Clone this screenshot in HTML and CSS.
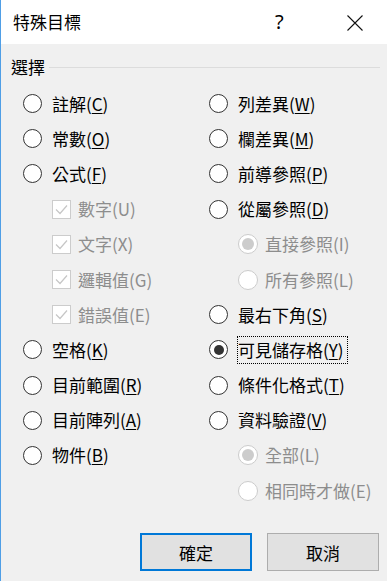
FILE: index.html
```html
<!DOCTYPE html>
<html lang="zh-Hant">
<head>
<meta charset="utf-8">
<title>特殊目標</title>
<link rel="stylesheet" href="styles.css">
</head>
<body>
<div class="window">
  <div class="titlebar">
    <span class="title">特殊目標</span>
    <span class="help">?</span>
    <span class="close">
      <svg width="16" height="16" viewBox="0 0 16 16"><path d="M0.5 0.5 L15.5 15.5 M15.5 0.5 L0.5 15.5" stroke="#111" stroke-width="1.1" fill="none"/></svg>
    </span>
  </div>
  <div class="content">
    <div class="group-head"><span class="group-label">選擇</span><span class="group-line"></span></div>
    <div class="cols">
      <div class="col col-left">
        <div class="row"><span class="radio"></span><span class="label">註解(<u>C</u>)</span></div>
        <div class="row"><span class="radio"></span><span class="label">常數(<u>O</u>)</span></div>
        <div class="row"><span class="radio"></span><span class="label">公式(<u>F</u>)</span></div>
        <div class="row sub disabled"><span class="check"><svg width="17" height="17" viewBox="0 0 17 17"><path d="M3 8.5 L7 12.5 L14 4.5" stroke="#c6c6c6" stroke-width="1.2" fill="none"/></svg></span><span class="label">數字(U)</span></div>
        <div class="row sub disabled"><span class="check"><svg width="17" height="17" viewBox="0 0 17 17"><path d="M3 8.5 L7 12.5 L14 4.5" stroke="#c6c6c6" stroke-width="1.2" fill="none"/></svg></span><span class="label">文字(X)</span></div>
        <div class="row sub disabled"><span class="check"><svg width="17" height="17" viewBox="0 0 17 17"><path d="M3 8.5 L7 12.5 L14 4.5" stroke="#c6c6c6" stroke-width="1.2" fill="none"/></svg></span><span class="label">邏輯值(G)</span></div>
        <div class="row sub disabled"><span class="check"><svg width="17" height="17" viewBox="0 0 17 17"><path d="M3 8.5 L7 12.5 L14 4.5" stroke="#c6c6c6" stroke-width="1.2" fill="none"/></svg></span><span class="label">錯誤值(E)</span></div>
        <div class="row"><span class="radio"></span><span class="label">空格(<u>K</u>)</span></div>
        <div class="row"><span class="radio"></span><span class="label">目前範圍(<u>R</u>)</span></div>
        <div class="row"><span class="radio"></span><span class="label">目前陣列(<u>A</u>)</span></div>
        <div class="row"><span class="radio"></span><span class="label">物件(<u>B</u>)</span></div>
      </div>
      <div class="col col-right">
        <div class="row"><span class="radio"></span><span class="label">列差異(<u>W</u>)</span></div>
        <div class="row"><span class="radio"></span><span class="label">欄差異(<u>M</u>)</span></div>
        <div class="row"><span class="radio"></span><span class="label">前導參照(<u>P</u>)</span></div>
        <div class="row"><span class="radio"></span><span class="label">從屬參照(<u>D</u>)</span></div>
        <div class="row sub disabled"><span class="radio checked"></span><span class="label">直接參照(I)</span></div>
        <div class="row sub disabled"><span class="radio"></span><span class="label">所有參照(L)</span></div>
        <div class="row"><span class="radio"></span><span class="label">最右下角(<u>S</u>)</span></div>
        <div class="row"><span class="radio checked"></span><span class="label focus">可見儲存格(<u>Y</u>)</span></div>
        <div class="row"><span class="radio"></span><span class="label">條件化格式(<u>T</u>)</span></div>
        <div class="row"><span class="radio"></span><span class="label">資料驗證(<u>V</u>)</span></div>
        <div class="row sub disabled"><span class="radio checked"></span><span class="label">全部(L)</span></div>
        <div class="row sub disabled"><span class="radio"></span><span class="label">相同時才做(E)</span></div>
      </div>
    </div>
    <div class="buttons">
      <button class="btn btn-primary">確定</button>
      <button class="btn">取消</button>
    </div>
  </div>
</div>
</body>
</html>
```

FILE: styles.css
```css
* { box-sizing: border-box; }
html, body {
  margin: 0;
  padding: 0;
  background: #f0f0f0;
}
body {
  font-family: "Noto Sans CJK TC", "Noto Sans", sans-serif;
  font-size: 17px;
  color: #000;
}
.window {
  width: 387px;
  height: 581px;
  border-left: 1px solid #4f9ee6;
  background: #f0f0f0;
  display: flex;
  flex-direction: column;
}
.titlebar {
  height: 44px;
  background: #fff;
  display: flex;
  align-items: center;
  padding-left: 12px;
}
.title {
  flex: 1;
  font-size: 17px;
  line-height: 44px;
}
.help {
  font-family: "Noto Sans", sans-serif;
  font-size: 20px;
  width: 14px;
  margin-right: 58px;
  line-height: 44px;
}
.close {
  display: flex;
  width: 16px;
  margin-right: 24px;
  margin-top: 1px;
}
.content {
  flex: 1;
  display: flex;
  flex-direction: column;
}
.group-head {
  display: flex;
  align-items: center;
  height: 46px;
  padding-left: 10px;
  padding-right: 7px;
}
.group-label {
  line-height: 20px;
  margin-right: 4px;
}
.group-line {
  flex: 1;
  height: 1px;
  background: #dcdcdc;
  margin-top: 1px;
}
.cols {
  display: grid;
  grid-template-columns: 186px 1fr;
  padding-left: 22px;
  margin-top: -4px;
}
.row {
  height: 35.2px;
  display: flex;
  align-items: center;
}
.row.sub {
  padding-left: 29px;
}
.radio {
  width: 19px;
  height: 19px;
  border-radius: 50%;
  border: 1.4px solid #333;
  background: #fff;
  margin-right: 10px;
  flex: none;
  display: flex;
  align-items: center;
  justify-content: center;
}
.radio.checked::after {
  content: "";
  width: 10px;
  height: 10px;
  border-radius: 50%;
  background: #333;
}
.row.sub .radio {
  margin-right: 7px;
  width: 20px;
  height: 20px;
}
.disabled .radio {
  border-color: #cccccc;
}
.disabled .radio.checked::after {
  background: #cccccc;
  width: 12px;
  height: 12px;
}
.check {
  width: 19px;
  height: 19px;
  border: 1px solid #cccccc;
  background: #fff;
  margin-right: 7px;
  flex: none;
  display: flex;
  align-items: center;
  justify-content: center;
}
.label {
  line-height: 22px;
  white-space: nowrap;
}
.label u {
  text-decoration-thickness: 1px;
  text-underline-offset: 2px;
}
.disabled .label {
  color: #8d8d8d;
}
.focus {
  outline: 1px dotted #000;
  outline-offset: 0;
  padding: 2px 3px 2px 0;
  margin-left: 0;
  box-shadow: none;
}
.buttons {
  display: flex;
  justify-content: flex-end;
  gap: 15px;
  padding-right: 8px;
  margin-top: 25px;
}
.btn {
  width: 112px;
  height: 38px;
  background: #e1e1e1;
  border: 1px solid #adadad;
  font-family: "Noto Sans CJK TC", sans-serif;
  font-size: 17px;
  color: #000;
  padding: 0;
  margin: 0;
}
.btn-primary {
  border: 2px solid #0078d7;
}
```
